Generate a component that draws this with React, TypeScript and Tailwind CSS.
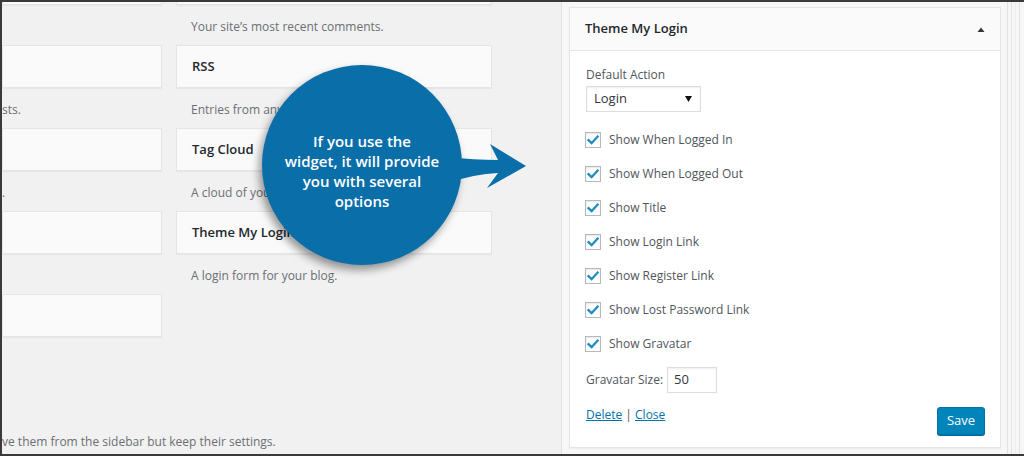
import React from 'react'

const options = [
    'Show When Logged In',
    'Show When Logged Out',
    'Show Title',
    'Show Login Link',
    'Show Register Link',
    'Show Lost Password Link',
    'Show Gravatar',
]

function WidgetBox({ title }: { title?: string }) {
    return (
        <div className="h-[43px] shrink-0 bg-[#fafafa] border border-[#e5e5e5] shadow-[0_1px_1px_rgba(0,0,0,0.04)] px-[15px] flex items-center text-[13px] font-semibold text-[#23282d]">
            {title}
        </div>
    )
}

function WidgetDesc({ text, indent = true }: { text?: string; indent?: boolean }) {
    return <p className={indent ? 'h-[40px] shrink-0 pt-[14px] pl-[15px] leading-[16px] whitespace-nowrap' : 'h-[40px] shrink-0 pt-[14px] leading-[16px] whitespace-nowrap'}>{text}</p>
}

function Checkbox() {
    return (
        <span className="w-[16px] h-[16px] shrink-0 bg-white border border-[#b4b9be] shadow-[inset_0_1px_2px_rgba(0,0,0,0.1)] flex items-center justify-center">
            <svg width="14" height="14" viewBox="0 0 14 14">
                <path d="M2.5 7.2 L5.6 10.2 L11.6 3.6" fill="none" stroke="#1e8cbe" strokeWidth="2.3" strokeLinecap="square" />
            </svg>
        </span>
    )
}

export default function App() {
    return (
        <div className="relative w-[1024px] h-[456px] overflow-hidden flex bg-[#f1f1f1] border-y-2 border-l-2 border-[#3a3a3a] font-['Open_Sans',sans-serif] text-[12px] text-[#6b6f73]">
            {/* Available widgets */}
            <div className="w-[559px] shrink-0 flex flex-col overflow-hidden">
                <div className="flex gap-[14px] -mt-[40px]">
                    <div className="w-[160px] shrink-0 flex flex-col">
                        <WidgetBox />
                        <WidgetDesc indent={false} />
                        <WidgetBox />
                        <WidgetDesc indent={false} text="sts." />
                        <WidgetBox />
                        <WidgetDesc indent={false} text="." />
                        <WidgetBox />
                        <WidgetDesc indent={false} />
                        <WidgetBox />
                    </div>
                    <div className="w-[316px] shrink-0 flex flex-col">
                        <WidgetBox />
                        <WidgetDesc text="Your site’s most recent comments." />
                        <WidgetBox title="RSS" />
                        <WidgetDesc text="Entries from any RSS or Atom feed." />
                        <WidgetBox title="Tag Cloud" />
                        <WidgetDesc text="A cloud of your most used tags." />
                        <WidgetBox title="Theme My Login" />
                        <WidgetDesc text="A login form for your blog." />
                    </div>
                </div>
                <p className="mt-auto mb-[4px] leading-[16px] whitespace-nowrap">ve them from the sidebar but keep their settings.</p>
            </div>

            {/* Sidebar */}
            <div className="w-[447px] shrink-0 bg-[#f7f7f7] border-x border-[#e2e2e2] pl-[7px] pt-[5px]">
                <div className="w-[432px] h-[441px] bg-white border border-[#e5e5e5] shadow-[0_1px_1px_rgba(0,0,0,0.04)] flex flex-col">
                    <div className="h-[43px] bg-[#fafafa] border-b border-[#e5e5e5] px-[15px] flex items-center justify-between text-[13px] font-semibold text-[#23282d]">
                        <span>Theme My Login</span>
                        <svg width="10" height="8" viewBox="0 0 10 8" className="-mr-[1px]">
                            <path d="M1.5 7 L5 2.5 L8.5 7 Z" fill="#32373c" />
                        </svg>
                    </div>
                    <div className="px-[16px] pt-[15px] flex flex-col text-[#50565c]">
                        <label className="leading-[18px]">Default Action</label>
                        <div className="mt-[2px] w-[115px] h-[26px] border border-[#ddd] shadow-[inset_0_1px_2px_rgba(0,0,0,0.07)] flex items-center justify-between pl-[7px] pr-[8px] text-[13px] text-[#32373c]">
                            <span>Login</span>
                            <svg width="7" height="6" viewBox="0 0 7 6">
                                <path d="M0 0 L7 0 L3.5 6 Z" fill="#111" />
                            </svg>
                        </div>
                        <div className="mt-[11px] flex flex-col">
                            {options.map((o) => (
                                <div key={o} className="h-[34px] flex items-center gap-[8px] -ml-[1px]">
                                    <Checkbox />
                                    <span>{o}</span>
                                </div>
                            ))}
                        </div>
                        <div className="mt-[6px] flex items-center gap-[4px]">
                            <span>Gravatar Size:</span>
                            <div className="w-[50px] h-[26px] border border-[#ddd] shadow-[inset_0_1px_2px_rgba(0,0,0,0.07)] flex items-center px-[6px] text-[13px] text-[#32373c]">50</div>
                        </div>
                        <div className="mt-[14px] flex items-start justify-between">
                            <div className="leading-[16px] text-[#0073aa]">
                                <a className="underline">Delete</a>
                                <span className="text-[#555]"> | </span>
                                <a className="underline">Close</a>
                            </div>
                            <button className="-mr-[1px] h-[28px] w-[48px] rounded-[3px] bg-[#0085ba] border border-[#0073aa] shadow-[0_1px_0_#006799] text-white text-[13px]">Save</button>
                        </div>
                    </div>
                </div>
            </div>

            {/* Scrollbar strip */}
            <div className="flex-1 flex gap-[3px] pl-[3px] bg-[#f6f6f6]">
                <div className="w-[1px] bg-[#e4e4e4]" />
                <div className="w-[1px] bg-[#ececec]" />
                <div className="w-[1px] bg-[#e4e4e4]" />
            </div>

            {/* Callout */}
            <div className="absolute left-[260px] top-[63px] w-[200px] h-[200px] rounded-full bg-[#0a6ea9] shadow-[-3px_5px_8px_rgba(0,0,0,0.4)] flex items-center justify-center pt-[12px]">
                <p className="text-white text-[15px] font-semibold leading-[20px] text-center">
                    If you use the<br />widget, it will provide<br />you with several<br />options
                </p>
            </div>
            <svg className="absolute left-[446px] top-[136px]" width="84" height="54" viewBox="448 138 84 54">
                <path d="M448 157 Q 474 160 498 160 L 490 144 L 526 166 L 487 188 L 498 173 Q 474 174 448 183 Z" fill="#0a6ea9" />
            </svg>
        </div>
    )
}
